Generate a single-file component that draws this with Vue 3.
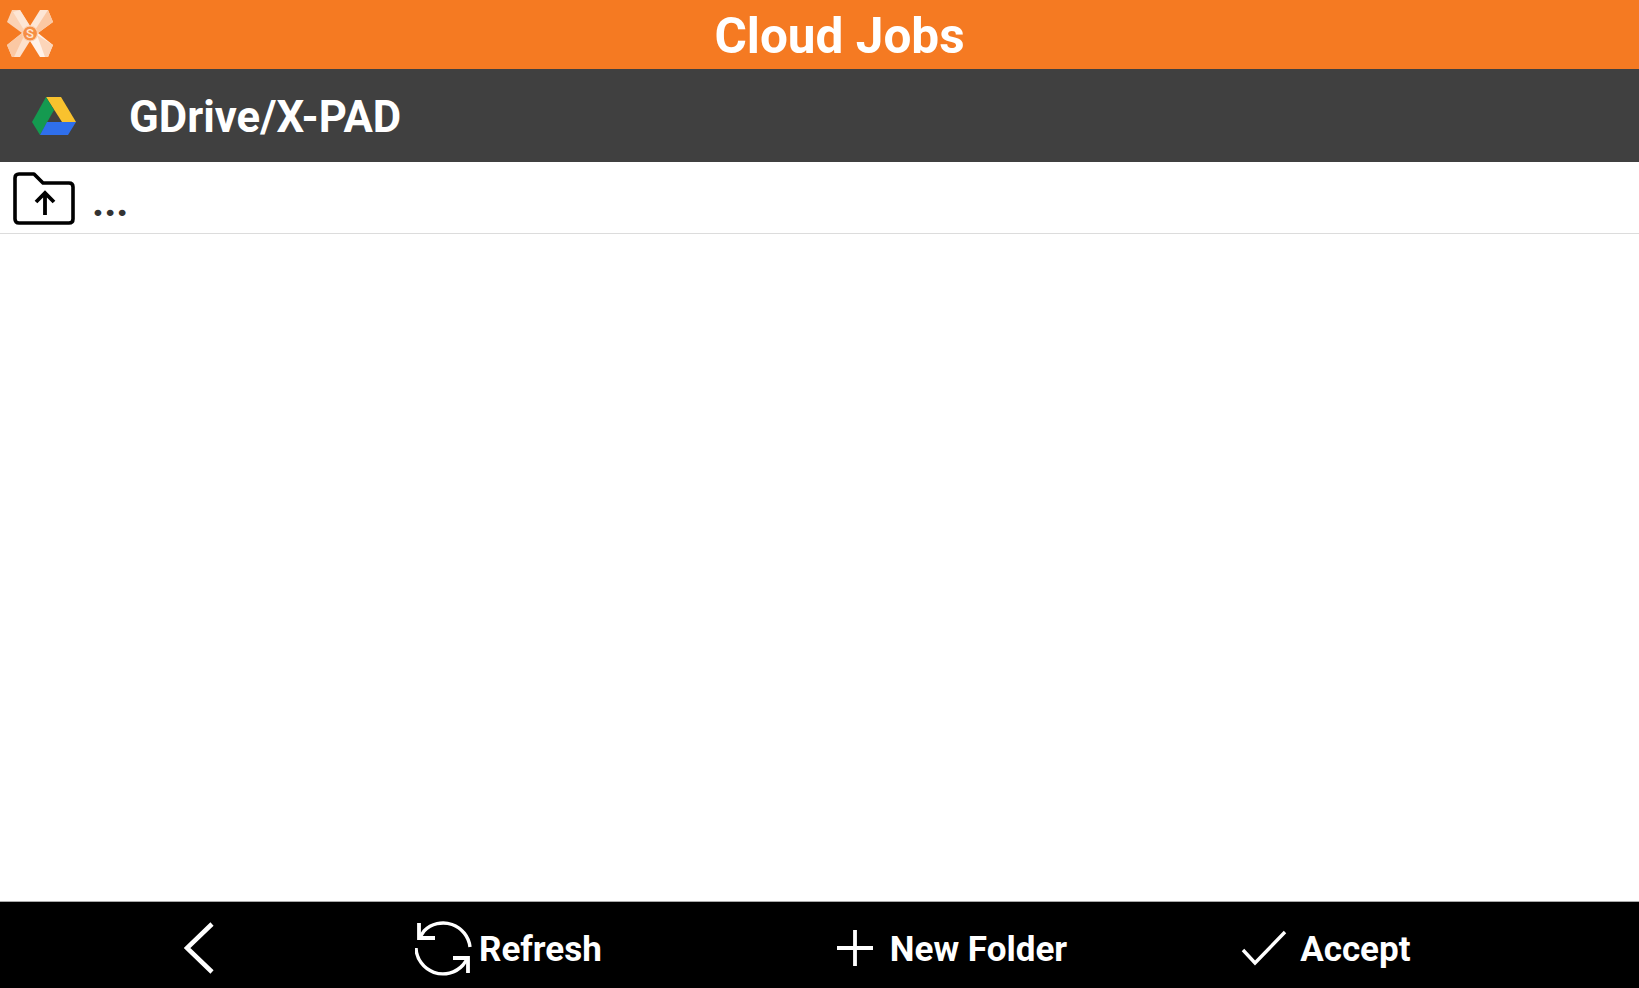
<template>
  <div class="screen">
    <header class="title-bar">
      <svg class="logo" viewBox="0 0 46 47" width="46" height="47">
        <path d="M5 0 L13 0 L23 16 L23 23 L15 23 L0 12Z" fill="#fbd2b4" />
        <path d="M13 0 L23 16 L23 23 L17 20 L6 2Z" fill="#fde6d5" />
        <path d="M33 0 L41 0 L46 12 L31 23 L23 23 L23 16Z" fill="#fde6d5" />
        <path d="M41 0 L46 12 L31 23 L28 20Z" fill="#fbc8a3" />
        <path d="M15 23 L23 23 L23 31 L13 47 L5 47 L0 35Z" fill="#fde0cb" />
        <path d="M15 23 L17 26 L7 47 L5 47 L0 35Z" fill="#fbc8a3" />
        <path d="M23 23 L31 23 L46 35 L41 47 L33 47 L23 31Z" fill="#fff2e9" />
        <path d="M30 25 L46 35 L41 47 L38 47Z" fill="#fcd5b9" />
        <circle cx="23" cy="23.5" r="7.5" fill="#f68f45" stroke="#fbd3b5" stroke-width="1.2" />
        <text x="23" y="28" text-anchor="middle" class="logo-s">S</text>
      </svg>
      <h1 class="title">Cloud Jobs</h1>
    </header>

    <div class="path-bar">
      <svg class="drive" viewBox="0 0 44 39" width="44" height="39">
        <path d="M14 0 L29 0 L44 25 L30 25Z" fill="#f9c22e" />
        <path d="M14 0 L22 13 L8 38 L0 25Z" fill="#149a50" />
        <path d="M15 25 L44 25 L36 38 L8 38Z" fill="#2f6fec" />
      </svg>
      <span class="path-text">GDrive/X-PAD</span>
    </div>

    <main class="file-list">
      <div class="file-row">
        <svg class="up-icon" viewBox="0 0 62 53" width="62" height="53">
          <path d="M2 6 Q2 2 6 2 L21 2 L30 11 L56 11 Q60 11 60 15 L60 47 Q60 51 56 51 L6 51 Q2 51 2 47Z" fill="none" stroke="#000" stroke-width="3.6" stroke-linejoin="round" />
          <path d="M32 43 L32 21 M23 30 L32 21 L41 30" fill="none" stroke="#000" stroke-width="3.8" />
        </svg>
        <span class="dots">...</span>
      </div>
    </main>

    <footer class="tool-bar">
      <button class="tool back">
        <svg viewBox="0 0 30 52" width="30" height="52">
          <path d="M28 2 L3 26 L28 50" fill="none" stroke="#fff" stroke-width="4.6" />
        </svg>
      </button>
      <button class="tool refresh">
        <svg viewBox="0 0 58 58" width="58" height="58">
          <path d="M5 18 L9 12 A27 27 0 0 1 55 28" fill="none" stroke="#fff" stroke-width="3.4" />
          <path d="M1 29 A27 27 0 0 0 48 46 L53 39" fill="none" stroke="#fff" stroke-width="3.4" />
          <path d="M4 4 L4 19 L20 19" fill="none" stroke="#fff" stroke-width="3.8" />
          <path d="M38 39 L53 39 L53 54" fill="none" stroke="#fff" stroke-width="3.8" />
        </svg>
        <span>Refresh</span>
      </button>
      <button class="tool new-folder">
        <svg viewBox="0 0 36 36" width="36" height="36">
          <path d="M18 0 L18 36 M0 18 L36 18" fill="none" stroke="#fff" stroke-width="3.8" />
        </svg>
        <span>New Folder</span>
      </button>
      <button class="tool accept">
        <svg viewBox="0 0 46 36" width="46" height="36">
          <path d="M2 20 L14 33 L44 2" fill="none" stroke="#fff" stroke-width="3.4" />
        </svg>
        <span>Accept</span>
      </button>
    </footer>
  </div>
</template>

<script setup>
</script>

<style>
html, body { margin: 0; padding: 0; background: #fff; }
</style>

<style scoped>
.screen { width: 1639px; height: 988px; display: flex; flex-direction: column; font-family: Roboto, "Liberation Sans", sans-serif; overflow: hidden; }

.title-bar { height: 69px; flex-shrink: 0; background: #f57a22; display: flex; align-items: center; justify-content: center; position: relative; padding: 4px 0 0 40px; box-sizing: border-box; }
.logo { position: absolute; left: 7px; top: 10px; }
.logo-s { font-size: 13px; font-weight: 500; fill: #fde6d5; font-family: Roboto, sans-serif; }
.title { margin: 0; color: #fff; font-size: 49.5px; font-weight: 700; line-height: 65px; }

.path-bar { height: 93px; flex-shrink: 0; background: #404040; display: flex; align-items: center; padding-left: 32px; box-sizing: border-box; }
.drive { flex-shrink: 0; margin-top: 2px; }
.path-text { margin-left: 53px; color: #fff; font-size: 43.7px; font-weight: 700; margin-top: 2px; }

.file-list { flex: 1; background: #fff; }
.file-row { height: 72px; box-sizing: border-box; border-bottom: 1px solid #dcdcdc; display: flex; align-items: center; padding-left: 13px; }
.up-icon { flex-shrink: 0; margin-top: 1px; }
.dots { margin-left: 17px; font-size: 42px; font-weight: 700; color: #333; line-height: 1; margin-top: 8px; }

.tool-bar { height: 87px; flex-shrink: 0; background: #000; border-top: 1px solid #aaa; box-sizing: border-box; display: flex; align-items: center; padding: 5px 0 0 184px; }
.tool { background: none; border: none; padding: 0; color: #fff; font-family: inherit; font-size: 35px; font-weight: 700; display: flex; align-items: center; }
.tool svg { flex-shrink: 0; display: block; }
.tool span { margin-top: 4px; }
.refresh { margin-left: 201px; gap: 6px; }
.new-folder { margin-left: 235px; gap: 17px; }
.accept { margin-left: 174px; gap: 13px; }
</style>
